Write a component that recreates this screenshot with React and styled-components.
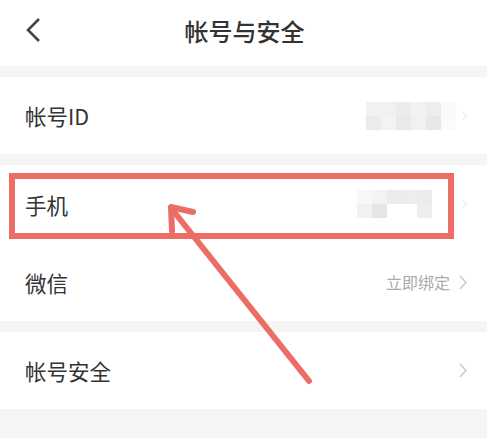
import React from "react";
import styled, { createGlobalStyle } from "styled-components";

const GlobalStyle = createGlobalStyle`
  html, body {
    margin: 0;
    padding: 0;
    background: #f5f5f5;
  }
  body {
    font-family: "Noto Sans CJK SC", "Noto Sans", sans-serif;
    color: #333;
  }
`;

const Page = styled.div`
  position: relative;
  width: 487px;
  height: 438px;
  overflow: hidden;
  background: #f5f5f5;
  display: flex;
  flex-direction: column;
`;

const Header = styled.div`
  height: 66px;
  background: #fff;
  display: flex;
  align-items: center;
  justify-content: center;
  position: relative;
  margin-bottom: 11px;
`;

const BackButton = styled.div`
  position: absolute;
  left: 25px;
  top: 16px;
  width: 20px;
  height: 28px;
  display: flex;
  align-items: center;
`;

const Title = styled.div`
  font-size: 24px;
  font-weight: 500;
  color: #333;
  margin: 0 0 6px 2px;
`;

const Group = styled.div`
  background: #fff;
  margin-bottom: 11px;
  display: flex;
  flex-direction: column;
`;

const Row = styled.div`
  height: ${p => p.h || 77}px;
  display: flex;
  align-items: center;
  padding: 0 20px 0 25px;
`;

const Label = styled.div`
  flex: 1;
  font-size: 21.5px;
  color: #333;
`;

const Hint = styled.div`
  font-size: 16px;
  color: #aaa;
  margin-right: 9px;
`;

const Blur = styled.div`
  display: grid;
  grid-template-columns: repeat(${p => p.cols}, 15px);
  grid-auto-rows: 14px;
  margin-right: ${p => p.mr}px;
`;

const Cell = styled.div`
  background: ${p => p.c};
`;

const Chevron = ({ color = "#c8c8c8", w = 8, h = 15 }) => (
  <svg width={w} height={h} viewBox="0 0 8 15">
    <path d="M1 1 L7 7.5 L1 14" fill="none" stroke={color} strokeWidth="1.4" />
  </svg>
);

const Overlay = styled.svg`
  position: absolute;
  left: 0;
  top: 0;
  pointer-events: none;
`;

const idCells = [
  "#f3f1f2", "#f1f1f1", "#ececec", "#f2f2f2", "#ededed", "#fafafa",
  "#ebebeb", "#f3f4f2", "#e8e9e8", "#f1f1f0", "#e6e8e6", "#fbfbfb"
];

const phoneCells = [
  "#f7f7f7", "#f3f3f3", "#ececec", "#ededed", "#ebebeb",
  "#f1f1f1", "#e5e5e5", "#ffffff", "#ffffff", "#eeeeee"
];

export default function App() {
  return (
    <>
      <GlobalStyle />
      <Page>
        <Header>
          <BackButton>
            <svg width="18" height="26" viewBox="0 0 18 26">
              <path d="M14 2 L3 13 L14 24" fill="none" stroke="#444" strokeWidth="2.6" />
            </svg>
          </BackButton>
          <Title>帐号与安全</Title>
        </Header>

        <Group>
          <Row h={77}>
            <Label>帐号ID</Label>
            <Blur cols={6} mr={6}>
              {idCells.map((c, i) => <Cell key={i} c={c} />)}
            </Blur>
            <Chevron color="#ddd" w={5} h={9} />
          </Row>
        </Group>

        <Group>
          <Row h={78}>
            <Label>手机</Label>
            <Blur cols={5} mr={30}>
              {phoneCells.map((c, i) => <Cell key={i} c={c} />)}
            </Blur>
            <Chevron color="#ddd" w={5} h={9} />
          </Row>
          <Row h={78}>
            <Label>微信</Label>
            <Hint>立即绑定</Hint>
            <Chevron />
          </Row>
        </Group>

        <Group>
          <Row h={77}>
            <Label>帐号安全</Label>
            <Chevron />
          </Row>
        </Group>

        <Overlay width="487" height="438" viewBox="0 0 487 438">
          <rect x="12" y="176" width="439" height="60" fill="none" stroke="#ec6d66" strokeWidth="6" />
          <path d="M309 381 L171 208" fill="none" stroke="#ec6d66" strokeWidth="6" strokeLinecap="round" />
          <path d="M193 212 L171 207 L172 231" fill="none" stroke="#ec6d66" strokeWidth="6" strokeLinecap="round" strokeLinejoin="round" />
        </Overlay>
      </Page>
    </>
  );
}
